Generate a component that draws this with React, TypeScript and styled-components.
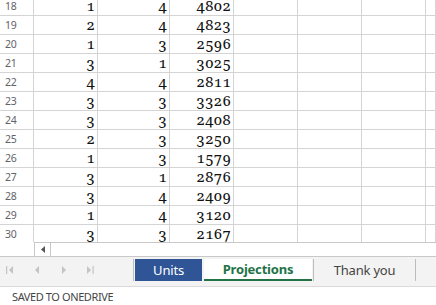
import React from "react";
import styled, { createGlobalStyle } from "styled-components";

const Global = createGlobalStyle`
  html, body { margin: 0; padding: 0; background: #fff; overflow: hidden; }
  body { width: 436px; height: 305px; font-family: "Noto Sans", "Open Sans", sans-serif; }
`;

const rows: [number, number, number, number][] = [
  [18, 1, 4, 4802],
  [19, 2, 4, 4823],
  [20, 1, 3, 2596],
  [21, 3, 1, 3025],
  [22, 4, 4, 2811],
  [23, 3, 3, 3326],
  [24, 3, 3, 2408],
  [25, 2, 3, 3250],
  [26, 1, 3, 1579],
  [27, 3, 1, 2876],
  [28, 3, 4, 2409],
  [29, 1, 4, 3120],
  [30, 3, 3, 2167],
];

const Page = styled.div`
  display: flex;
  flex-direction: column;
  width: 436px;
  height: 305px;
`;

const Viewport = styled.div`
  height: 242px;
  overflow: hidden;
`;

const Grid = styled.div`
  margin-top: -3px;
  display: grid;
  grid-template-columns: 34px 64px 72px 64px 64px 64px 64px 1fr;
  grid-auto-rows: 19px;
`;

const Cell = styled.div`
  box-sizing: border-box;
  border-right: 1px solid #d4d4d4;
  border-bottom: 1px solid #d4d4d4;
  display: flex;
  align-items: flex-end;
  justify-content: flex-end;
  padding: 0 2px 4px 0;
  font-family: "Noto Serif", "DejaVu Serif", "Liberation Serif", serif;
  font-variant-numeric: oldstyle-nums;
  font-size: 15px;
  line-height: 11px;
  color: #111;
`;

const RowHead = styled.div`
  box-sizing: border-box;
  border-right: 1px solid #d4d4d4;
  border-bottom: 1px solid #d4d4d4;
  display: flex;
  align-items: center;
  padding-left: 5px;
  font-family: "Noto Sans", sans-serif;
  font-size: 10.5px;
  letter-spacing: -0.3px;
  color: #5f6368;
`;

const ScrollRow = styled.div`
  height: 14px;
  display: flex;
  border-bottom: 1px solid #c8c8c8;
`;

const ScrollSpacer = styled.div`
  width: 34px;
`;

const ScrollTrack = styled.div`
  flex: 1;
  box-sizing: border-box;
  border-top: 1px solid #c8c8c8;
  border-left: 1px solid #c8c8c8;
  display: flex;
`;

const ScrollButton = styled.div`
  width: 16px;
  box-sizing: border-box;
  border-right: 1px solid #c8c8c8;
  display: flex;
  align-items: center;
  justify-content: center;
`;

const TabBar = styled.div`
  height: 27px;
  background: #f3f3f3;
  border-bottom: 1px solid #dadada;
  display: flex;
  align-items: flex-start;
  padding-top: 2px;
  box-sizing: content-box;
`;

const Nav = styled.div`
  width: 133px;
  height: 22px;
  display: flex;
  align-items: center;
`;

const NavIcon = styled.svg<{ $x: number }>`
  margin-left: ${(p) => p.$x}px;
  display: block;
`;

const Divider = styled.div`
  width: 1px;
  height: 22px;
  background: #bdbdbd;
`;

const Tab = styled.div<{ $variant: "blue" | "active" | "plain"; $w: number; $mx?: number }>`
  box-sizing: border-box;
  width: ${(p) => p.$w}px;
  height: 22px;
  margin: 0 ${(p) => p.$mx ?? 0}px;
  display: flex;
  align-items: center;
  justify-content: center;
  font-family: "Noto Sans", "Open Sans", sans-serif;
  font-size: 13px;
  letter-spacing: -0.2px;
  padding-bottom: 1px;
  ${(p) =>
    p.$variant === "blue"
      ? `background: #2f5597; color: #fff;`
      : p.$variant === "active"
      ? `background: #fff; color: #217346; font-weight: 700; border-bottom: 2px solid #217346; padding-bottom: 0;`
      : `background: transparent; color: #444;`}
`;

const Status = styled.div`
  flex: 1;
  display: flex;
  align-items: center;
  padding-left: 12px;
  font-family: "Noto Sans", sans-serif;
  font-size: 11px;
  letter-spacing: -0.4px;
  color: #444;
`;

export default function App() {
  return (
    <Page>
      <Global />
      <Viewport>
        <Grid>
          {rows.map(([n, a, b, c]) => (
            <React.Fragment key={n}>
              <RowHead>{n}</RowHead>
              <Cell>{a}</Cell>
              <Cell>{b}</Cell>
              <Cell>{c}</Cell>
              <Cell />
              <Cell />
              <Cell />
              <Cell />
            </React.Fragment>
          ))}
        </Grid>
      </Viewport>
      <ScrollRow>
        <ScrollSpacer />
        <ScrollTrack>
          <ScrollButton>
            <svg width="4" height="7" viewBox="0 0 4 7">
              <path d="M4 0 L0 3.5 L4 7 Z" fill="#555" />
            </svg>
          </ScrollButton>
        </ScrollTrack>
      </ScrollRow>
      <TabBar>
        <Nav>
          <NavIcon $x={6} width="8" height="8" viewBox="0 0 8 8">
            <rect x="0" y="0" width="1.2" height="8" fill="#c4c4c4" />
            <path d="M7 0 L3 4 L7 8 Z" fill="#c4c4c4" />
          </NavIcon>
          <NavIcon $x={20} width="5" height="8" viewBox="0 0 5 8">
            <path d="M5 0 L1 4 L5 8 Z" fill="#c4c4c4" />
          </NavIcon>
          <NavIcon $x={23} width="5" height="8" viewBox="0 0 5 8">
            <path d="M0 0 L4 4 L0 8 Z" fill="#c4c4c4" />
          </NavIcon>
          <NavIcon $x={20} width="7" height="8" viewBox="0 0 7 8">
            <path d="M0 0 L4 4 L0 8 Z" fill="#c4c4c4" />
            <rect x="5.5" y="0" width="1.2" height="8" fill="#c4c4c4" />
          </NavIcon>
        </Nav>
        <Divider />
        <Tab $variant="blue" $w={67} $mx={1}>Units</Tab>
        <Tab $variant="active" $w={108} $mx={1}>Projections</Tab>
        <Divider />
        <Tab $variant="plain" $w={101}>Thank you</Tab>
        <Divider />
      </TabBar>
      <Status>SAVED TO ONEDRIVE</Status>
    </Page>
  );
}
